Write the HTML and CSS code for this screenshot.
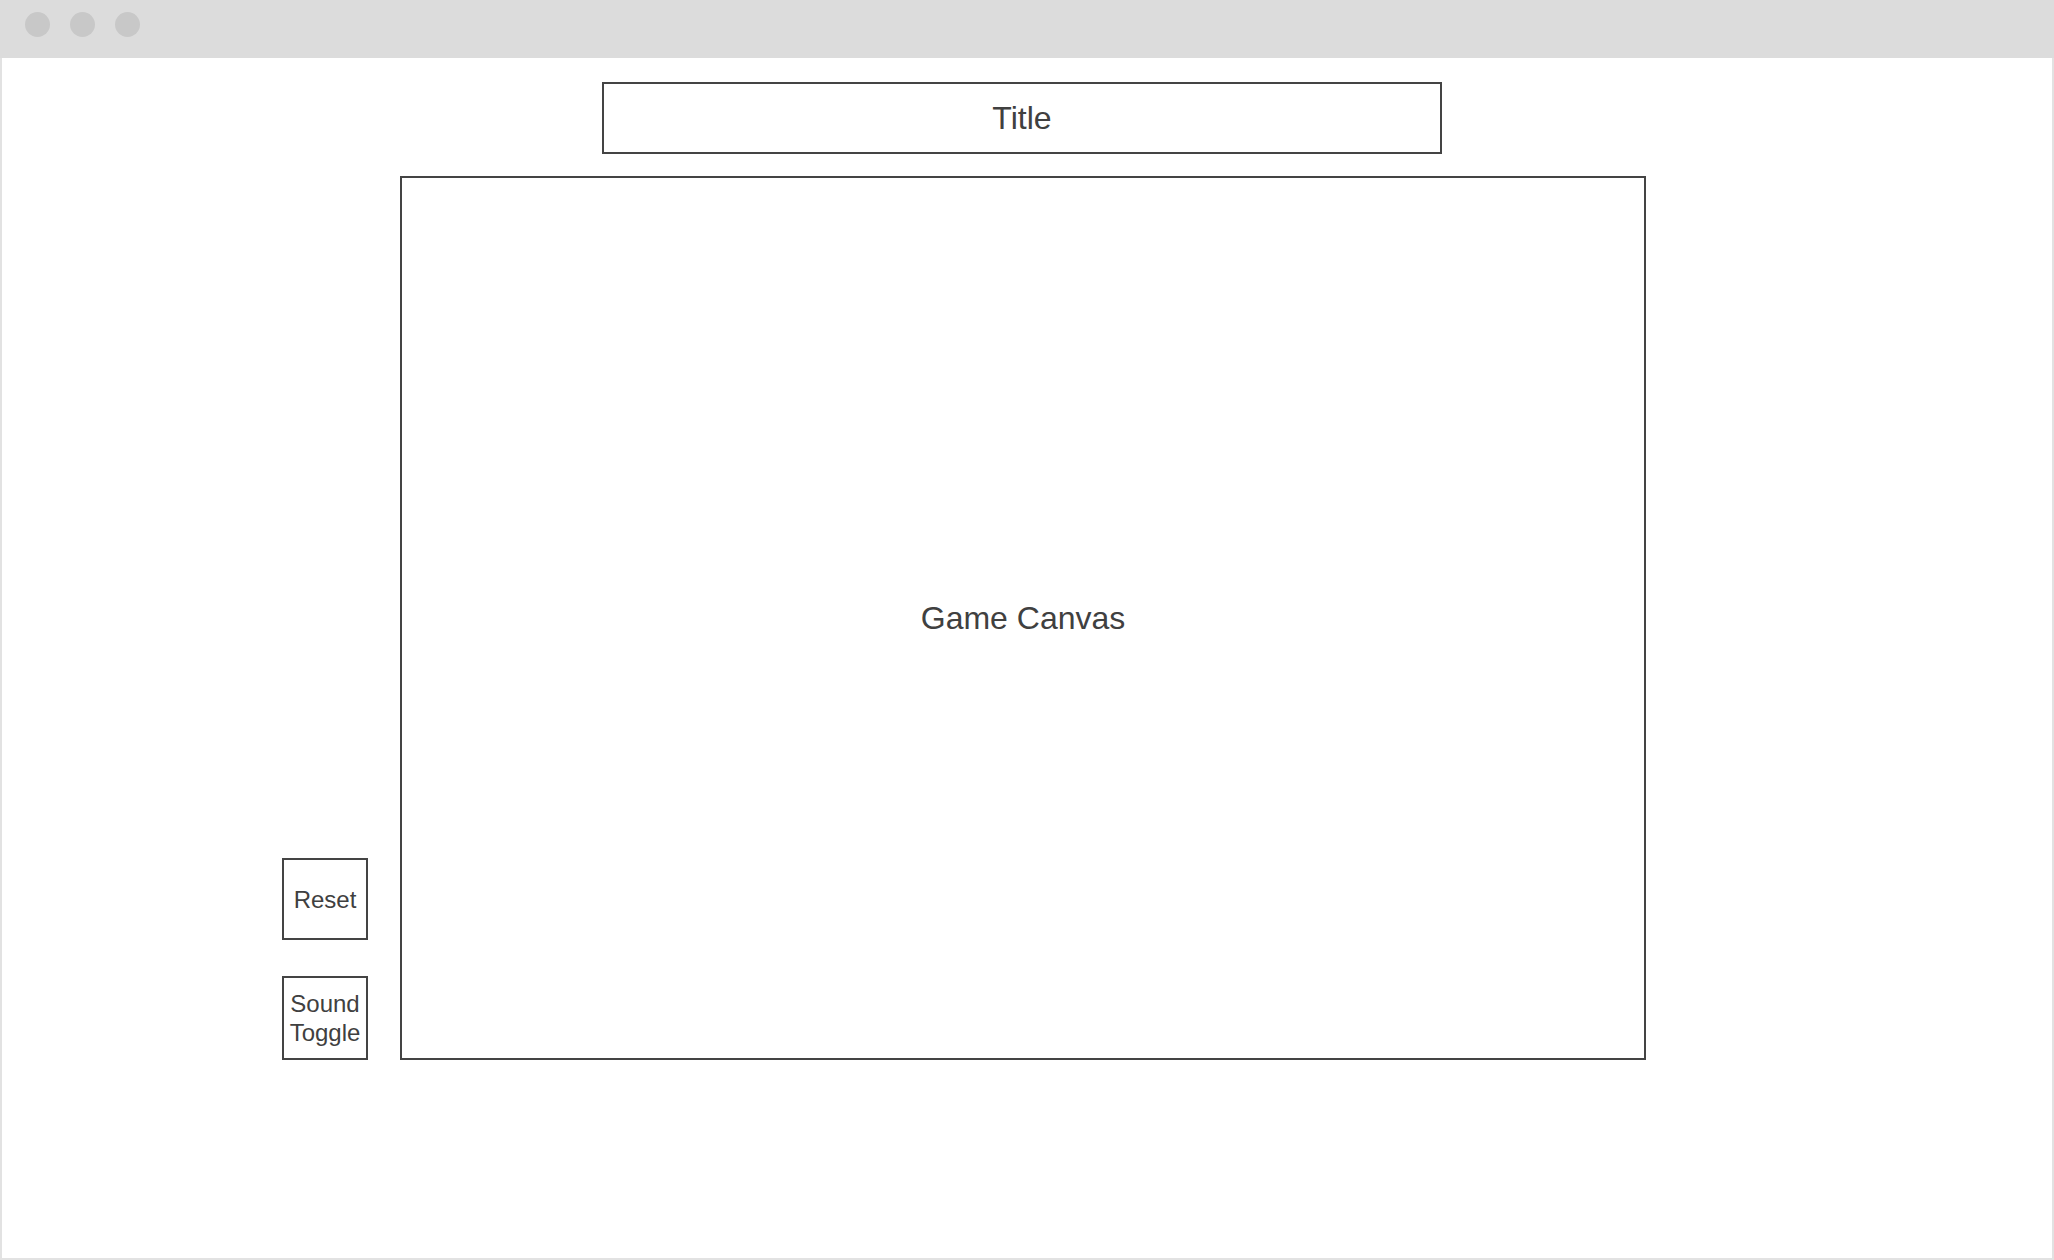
FILE: index.html
```html
<!DOCTYPE html>
<html>
<head>
<meta charset="utf-8">
<link rel="stylesheet" href="styles.css">
</head>
<body>
<div class="window">
  <div class="titlebar">
    <span class="dot"></span><span class="dot"></span><span class="dot"></span>
  </div>
  <div class="content">
    <div class="title">Title</div>
    <div class="stage">
      <div class="controls">
        <div class="btn">Reset</div>
        <div class="btn btn-sound">Sound<br>Toggle</div>
      </div>
      <div class="canvas">Game Canvas</div>
    </div>
  </div>
</div>
</body>
</html>
```

FILE: styles.css
```css
html, body {
  margin: 0;
  padding: 0;
  background: #ffffff;
}
body {
  font-family: "Liberation Sans", Arial, sans-serif;
  color: #404040;
}
.window {
  width: 2054px;
  height: 1260px;
  box-sizing: border-box;
  border: 2px solid #e2e2e2;
  border-top: none;
  display: flex;
  flex-direction: column;
}
.titlebar {
  height: 58px;
  margin: 0 -2px;
  background: #dcdcdc;
  display: flex;
  align-items: center;
  padding-left: 25px;
  gap: 20px;
  padding-bottom: 10px;
  box-sizing: border-box;
}
.dot {
  width: 25px;
  height: 25px;
  border-radius: 50%;
  background: #c8c8c8;
}
.content {
  display: flex;
  flex-direction: column;
  padding-top: 24px;
}
.title {
  margin-left: 600px;
  width: 840px;
  height: 72px;
  box-sizing: border-box;
  border: 2px solid #444444;
  display: flex;
  align-items: center;
  justify-content: center;
  font-size: 32px;
}
.stage {
  display: flex;
  margin-top: 22px;
  margin-left: 280px;
  gap: 32px;
}
.controls {
  width: 86px;
  display: flex;
  flex-direction: column;
  justify-content: flex-end;
  gap: 36px;
}
.btn {
  height: 82px;
  box-sizing: border-box;
  border: 2px solid #444444;
  display: flex;
  align-items: center;
  justify-content: center;
  text-align: center;
  font-size: 24px;
  line-height: 29px;
}
.btn-sound {
  height: 84px;
}
.canvas {
  width: 1246px;
  height: 884px;
  box-sizing: border-box;
  border: 2px solid #444444;
  display: flex;
  align-items: center;
  justify-content: center;
  font-size: 32px;
}
```
